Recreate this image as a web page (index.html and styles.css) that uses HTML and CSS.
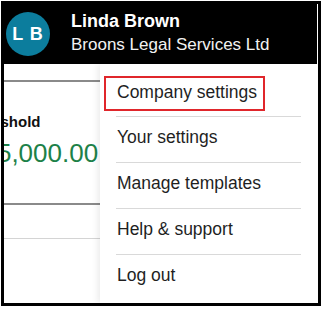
FILE: index.html
```html
<!DOCTYPE html>
<html lang="en">
<head>
<meta charset="utf-8">
<title>Account menu</title>
<link rel="stylesheet" href="styles.css">
</head>
<body>
<div class="frame">
  <header class="header">
    <div class="avatar">L B</div>
    <div class="who">
      <div class="name">Linda Brown</div>
      <div class="company">Broons Legal Services Ltd</div>
    </div>
  </header>
  <div class="main">
    <section class="summary">
      <div class="rule dark"></div>
      <div class="label">Threshold</div>
      <div class="amount">£25,000.00</div>
      <div class="rule dark gap"></div>
      <div class="rule light"></div>
    </section>
    <nav class="menu">
      <div class="menu-first"><a class="focus">Company settings</a></div>
      <a class="menu-item">Your settings</a>
      <a class="menu-item">Manage templates</a>
      <a class="menu-item">Help &amp; support</a>
      <a class="menu-item">Log out</a>
    </nav>
  </div>
</div>
</body>
</html>
```

FILE: styles.css
```css
html, body {
  margin: 0;
  padding: 0;
  background: #fff;
}
body {
  font-family: "Liberation Sans", Arial, sans-serif;
  color: #1f1f1f;
}
.frame {
  box-sizing: border-box;
  margin: 1px 0 0 1px;
  width: 320px;
  height: 305px;
  border: 3px solid #000;
  display: flex;
  flex-direction: column;
  overflow: hidden;
}
.header {
  height: 60px;
  flex: none;
  margin-right: 1px;
  background: #000;
  color: #fff;
  display: flex;
  align-items: center;
  padding-left: 2px;
  gap: 21px;
}
.avatar {
  width: 44px;
  height: 44px;
  border-radius: 50%;
  background: #0c7d9d;
  color: #fff;
  font-weight: 700;
  font-size: 18px;
  letter-spacing: 1px;
  display: flex;
  align-items: center;
  justify-content: center;
  margin-top: 0px;
  flex: none;
}
.who {
  align-self: flex-start;
  padding-top: 5px;
}
.name {
  font-weight: 700;
  font-size: 18px;
  line-height: 24px;
}
.company {
  font-size: 17px;
  line-height: 24px;
  color: #f2f2f2;
}
.main {
  flex: 1;
  display: flex;
  margin-right: 1px;
  min-height: 0;
}
.summary {
  width: 96px;
  flex: none;
  overflow: hidden;
  padding-top: 16px;
}
.rule {
  height: 0;
  width: 100%;
}
.rule.dark {
  border-top: 2px solid #8a8a8a;
}
.rule.light {
  border-top: 1px solid #d4d4d4;
  margin-top: 33px;
}
.rule.gap {
  margin-top: 35px;
}
.label {
  margin: 31px 0 0 -36px;
  font-weight: 700;
  font-size: 15px;
  line-height: 18px;
  color: #111;
  white-space: nowrap;
}
.amount {
  margin: 7px 0 0 -36px;
  font-size: 26px;
  line-height: 30px;
  color: #1d8148;
  white-space: nowrap;
}
.menu {
  flex: 1;
  background: #fff;
  box-shadow: -3px 0 6px rgba(0, 0, 0, 0.07);
  display: flex;
  flex-direction: column;
  position: relative;
}
.menu-first {
  padding: 12px 0 5px 4px;
}
.focus {
  display: inline-block;
  border: 2px solid #e0262b;
  padding: 4px 6px 7px 11px;
  font-size: 17.5px;
  line-height: 20px;
}
.menu-item {
  display: block;
  margin: 0 16px;
  border-top: 1px solid #d9d9d9;
  padding: 10px 0 15px 1px;
  font-size: 17.5px;
  line-height: 20px;
}
```
